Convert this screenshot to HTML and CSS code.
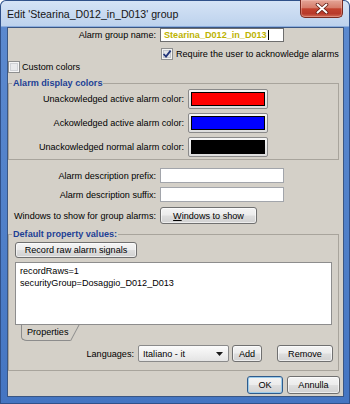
FILE: index.html
```html
<!DOCTYPE html>
<html>
<head>
<meta charset="utf-8">
<link rel="stylesheet" href="styles.css">
</head>
<body>
<div class="window">
  <div class="titlebar">
    <span class="title">Edit 'Stearina_D012_in_D013' group</span>
    <div class="close">
      <svg width="14" height="11" viewBox="0 0 14 11"><path d="M2.5 1.5 L11.5 9.5 M11.5 1.5 L2.5 9.5" stroke="#5e1b12" stroke-width="3.6" stroke-linecap="round"/><path d="M2.5 1.5 L11.5 9.5 M11.5 1.5 L2.5 9.5" stroke="#ffffff" stroke-width="2" stroke-linecap="round"/></svg>
    </div>
  </div>
  <div class="content">
    <div class="row r-name">
      <span class="lbl">Alarm group name:</span>
      <div class="field field-name"><span class="name-text">Stearina_D012_in_D013</span><span class="caret"></span></div>
    </div>
    <div class="row r-ack">
      <svg class="cb" width="12" height="12" viewBox="0 0 12 12"><rect x="0.5" y="0.5" width="11" height="11" fill="#f3f3f3" stroke="#8e8f8f"/><rect x="2.5" y="2.5" width="7" height="7" fill="#e2e4e8" stroke="#c3c6cc"/><path d="M2.6 6 L5 8.6 L9.6 2.6" fill="none" stroke="#22357a" stroke-width="1.8"/></svg>
      <span>Require the user to acknowledge alarms</span>
    </div>
    <div class="row r-custom">
      <svg class="cb" width="12" height="12" viewBox="0 0 12 12"><rect x="0.5" y="0.5" width="11" height="11" fill="#f6f6f6" stroke="#8e8f8f"/><rect x="2.5" y="2.5" width="7" height="7" fill="#e9eaec" stroke="#d0d2d6"/></svg>
      <span>Custom colors</span>
    </div>
    <fieldset class="group g-colors">
      <legend>Alarm display colors</legend>
      <div class="crow"><span class="clbl">Unackowledged active alarm color:</span><span class="swatch"><span class="fill red"></span></span></div>
      <div class="crow"><span class="clbl">Ackowledged active alarm color:</span><span class="swatch"><span class="fill blue"></span></span></div>
      <div class="crow"><span class="clbl">Unackowledged normal alarm color:</span><span class="swatch"><span class="fill black"></span></span></div>
    </fieldset>
    <div class="row r-prefix">
      <span class="lbl">Alarm description prefix:</span>
      <div class="field"></div>
    </div>
    <div class="row r-suffix">
      <span class="lbl">Alarm description suffix:</span>
      <div class="field"></div>
    </div>
    <div class="row r-win">
      <span class="lbl">Windows to show for group alarms:</span>
      <button class="btn btn-win"><span><u>W</u>indows to show</span></button>
    </div>
    <fieldset class="group g-props">
      <legend>Default property values:</legend>
      <button class="btn btn-rec">Record raw alarm signals</button>
      <div class="textarea">recordRaws=1<br>securityGroup=Dosaggio_D012_D013</div>
      <div class="tabs"><span class="tab">Properties</span></div>
      <div class="langrow">
        <span>Languages:</span>
        <div class="combo"><span>Italiano - it</span><svg width="7" height="4" viewBox="0 0 7 4"><path d="M0 0 H7 L3.5 4 Z" fill="#1a1a1a"/></svg></div>
        <button class="btn btn-add">Add</button>
        <button class="btn btn-rem">Remove</button>
      </div>
    </fieldset>
    <div class="dlg">
      <button class="btn btn-ok">OK</button>
      <button class="btn btn-cancel">Annulla</button>
    </div>
  </div>
</div>
</body>
</html>
```

FILE: styles.css
```css
* { box-sizing: border-box; }
html, body { margin: 0; padding: 0; }
body {
  width: 350px;
  height: 404px;
  overflow: hidden;
  background: #ffffff;
  font-family: "Liberation Sans", Arial, sans-serif;
  font-size: 9.1px;
  color: #000;
}
.window {
  width: 350px;
  height: 404px;
  display: flex;
  flex-direction: column;
  padding: 0 6px 7px 7px;
  background: linear-gradient(to bottom, #d6e4f6 0px, #bdd2ed 26px, #5b89cf 27px, #4f7fc8 60%, #4475c2 100%);
  border-radius: 6px 6px 0 0;
  box-shadow: inset 0 0 0 1px #30518a;
}
.titlebar {
  height: 27px;
  flex: none;
  display: flex;
  align-items: flex-start;
}
.title {
  padding-top: 8px;
  line-height: 12px;
  font-size: 10.6px;
  color: #151515;
  white-space: nowrap;
}
.close {
  margin-left: auto;
  margin-right: 1px;
  width: 43px;
  height: 18px;
  border: 1px solid #7a2a20;
  border-top: none;
  border-radius: 0 0 5px 5px;
  background: linear-gradient(to bottom, #e4a597 0%, #d67d6b 45%, #c2422e 52%, #b8392a 80%, #cf6c56 100%);
  box-shadow: inset 0 0 0 1px rgba(255, 210, 200, 0.35);
  display: flex;
  align-items: center;
  justify-content: center;
}
.content {
  flex: 1;
  background: #d4d0c8;
  border: 1px solid #3a5683;
  display: flex;
  flex-direction: column;
}
.row {
  display: flex;
  align-items: center;
  white-space: nowrap;
  flex: none;
}
.lbl {
  width: 149px;
  padding-right: 1px;
  margin-right: 3px;
  text-align: right;
  flex: none;
}
.field {
  width: 124px;
  height: 15px;
  background: #fff;
  border: 1px solid #a2a5ab;
}
.r-name { height: 14px; }
.field-name {
  height: 14px;
  border-color: #6e6e6e;
  display: flex;
  align-items: center;
  padding-left: 3px;
}
.name-text { font-weight: bold; color: #bdb300; }
.caret { width: 1px; height: 10px; background: #000; margin-left: 1px; }
.r-ack { height: 13px; margin-top: 5px; padding-left: 153px; }
.cb { display: block; flex: none; margin-right: 2px; }
.r-ack .cb { margin-right: 3px; }
.r-custom { height: 12px; margin-top: 1px; }

.group {
  margin: 4px 4px 0 0;
  padding: 0 0 2px 0;
  border: 1px solid #a8a49c;
  min-width: 0;
  flex: none;
}
.group legend {
  margin-left: 3px;
  padding: 0 1px;
  font-weight: bold;
  color: #1d3f95;
  line-height: 12px;
}
.crow {
  display: flex;
  align-items: center;
  height: 20px;
  white-space: nowrap;
}
.crow + .crow { margin-top: 4px; }
.clbl { width: 175px; text-align: right; margin-right: 4px; }
.swatch {
  width: 80px;
  height: 20px;
  border: 1px solid #8a8a8a;
  border-radius: 2px;
  background: linear-gradient(#f6f6f6, #dcdcdc);
  padding: 2px;
}
.fill { display: block; width: 100%; height: 100%; border: 1px solid #000; }
.red { background: #ff0000; }
.blue { background: #0000ff; }
.black { background: #000000; }

.r-prefix { margin-top: 8px; height: 15px; }
.r-suffix { margin-top: 4px; height: 15px; }
.r-win { margin-top: 5px; height: 17px; }

.btn {
  font: inherit;
  color: #000;
  margin: 0;
  padding: 0;
  height: 17px;
  border: 1px solid #707070;
  border-radius: 3px;
  background: linear-gradient(to bottom, #f4f4f4 0%, #ececec 48%, #dedede 52%, #d1d1d1 100%);
  box-shadow: inset 0 0 0 1px rgba(255, 255, 255, 0.6);
  display: flex;
  align-items: center;
  justify-content: center;
  white-space: nowrap;
  flex: none;
}
.btn-win { width: 97px; }

.g-props { padding-bottom: 8px; }
.btn-rec { width: 122px; height: 16px; margin: 2px 0 0 6px; }
.textarea {
  margin: 4px 6px 0 6px;
  height: 63px;
  background: #fff;
  border: 1px solid #8d8d8d;
  padding: 2px 0 0 4px;
  line-height: 12px;
  white-space: nowrap;
}
.tabs { height: 16px; padding-left: 12px; display: flex; align-items: flex-start; }
.tab {
  position: relative;
  height: 16px;
  line-height: 14px;
  padding: 0 2px 0 5px;
  border-left: 1px solid #8c8c8c;
  border-bottom: 1px solid #8c8c8c;
  border-bottom-left-radius: 6px 4px;
}
.tab::after {
  content: "";
  position: absolute;
  top: 0;
  bottom: -1px;
  right: -1px;
  border-right: 1px solid #8c8c8c;
  transform: skewX(-28deg);
  transform-origin: bottom;
}
.langrow {
  margin: 4px 5px 0 0;
  height: 17px;
  display: flex;
  justify-content: flex-end;
  align-items: center;
  white-space: nowrap;
}
.combo {
  width: 91px;
  height: 17px;
  margin-left: 4px;
  border: 1px solid #8a8a8a;
  border-radius: 2px;
  background: linear-gradient(#fbfbfb, #e4e4e4);
  display: flex;
  align-items: center;
  justify-content: space-between;
  padding: 0 5px 0 4px;
}
.btn-add { width: 30px; margin-left: 3px; }
.btn-rem { width: 56px; margin-left: 15px; }
.dlg {
  margin: 5px 3px 0 0;
  display: flex;
  justify-content: flex-end;
  gap: 4px;
}
.btn-ok {
  width: 36px;
  height: 18px;
  border-color: #2f5b8c;
  box-shadow: inset 0 0 0 1px #9ccbea;
}
.btn-cancel { width: 53px; height: 18px; }
```
